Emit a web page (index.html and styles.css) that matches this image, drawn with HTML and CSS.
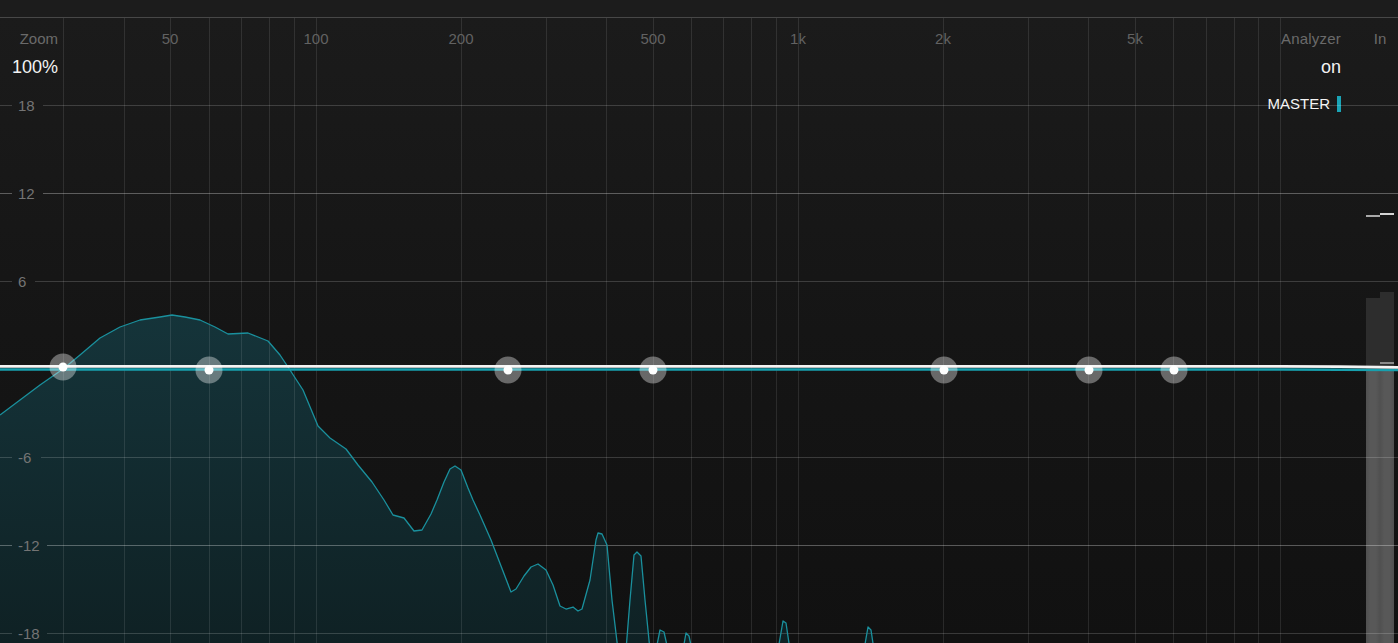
FILE: index.html
```html
<!DOCTYPE html>
<html lang="en">
<head>
<meta charset="utf-8">
<title>EQ</title>
<link rel="stylesheet" href="styles.css">
</head>
<body>
<div class="topbar"></div>
<main class="graph">
  <div class="overlay">
    <div class="zoom-ctl">
      <div class="ctl-label">Zoom</div>
      <div class="ctl-value">100%</div>
    </div>
    <div class="right-ctls">
      <div class="analyzer-ctl">
        <div class="ctl-label">Analyzer</div>
        <div class="ctl-value">on</div>
        <div class="source">MASTER<span class="source-bar"></span></div>
      </div>
      <div class="meter-col">
        <div class="ctl-label">In</div>
        <div class="meter">
          <div class="channel">
            <div class="peak peak-left"></div>
            <div class="spacer"></div>
            <div class="level-dark" style="height:72px"></div>
            <div class="level-light" style="height:273px"></div>
          </div>
          <div class="channel">
            <div class="peak peak-right"></div>
            <div class="spacer"></div>
            <div class="level-dark" style="height:78px"><div class="hold-mark"></div></div>
            <div class="level-light" style="height:273px"></div>
          </div>
        </div>
      </div>
    </div>
  </div>

  <svg class="plot" viewBox="0 18 1398 625" width="1398" height="625" xmlns="http://www.w3.org/2000/svg">
    <defs>
      <linearGradient id="specFill" gradientUnits="userSpaceOnUse" x1="0" y1="315" x2="0" y2="643">
        <stop offset="0" stop-color="#15343a"/>
        <stop offset="1" stop-color="#0f2124"/>
      </linearGradient>
    </defs>

    <path class="spec-fill" d="M0,415 L20,400 L40,385 L63,369 L80,355 L100,338 L120,327 L140,320 L160,317 L172,315 L185,317 L200,320 L215,327 L228,334 L248,333 L268,341 L280,355 L290,370 L303,390 L318,426 L330,438 L346,449 L358,465 L372,482 L384,500 L393,515 L404,518 L414,531 L422,530 L431,514 L437,500 L444,482 L450,469 L455,466 L461,470 L468,488 L473,500 L480,515 L491,540 L501,566 L511,592 L516,589 L524,576 L531,567 L538,564 L546,570 L553,585 L560,606 L566,609 L573,607 L578,611 L582,609 L590,580 L596,540 L598,533 L602,534 L607,545 L612,600 L618,650 L626,650 L630,600 L634,555 L637,552 L641,556 L645,600 L650,650 L656,650 L660,630 L664,632 L668,650 L683,650 L686,633 L689,636 L692,650 L778,650 L783,621 L786,623 L790,650 L864,650 L868,627 L871,630 L874,650 L0,650 Z"/>

    <g class="vgrid">
      <line x1="63.5" y1="18" x2="63.5" y2="643"/>
      <line x1="124.5" y1="18" x2="124.5" y2="643"/>
      <line x1="170.5" y1="18" x2="170.5" y2="643"/>
      <line x1="209.5" y1="18" x2="209.5" y2="643"/>
      <line x1="241.5" y1="18" x2="241.5" y2="643"/>
      <line x1="269.5" y1="18" x2="269.5" y2="643"/>
      <line x1="294.5" y1="18" x2="294.5" y2="643"/>
      <line x1="316.5" y1="18" x2="316.5" y2="643"/>
      <line x1="461.5" y1="18" x2="461.5" y2="643"/>
      <line x1="546.5" y1="18" x2="546.5" y2="643"/>
      <line x1="606.5" y1="18" x2="606.5" y2="643"/>
      <line x1="653.5" y1="18" x2="653.5" y2="643"/>
      <line x1="691.5" y1="18" x2="691.5" y2="643"/>
      <line x1="723.5" y1="18" x2="723.5" y2="643"/>
      <line x1="751.5" y1="18" x2="751.5" y2="643"/>
      <line x1="776.5" y1="18" x2="776.5" y2="643"/>
      <line x1="798.5" y1="18" x2="798.5" y2="643"/>
      <line x1="943.5" y1="18" x2="943.5" y2="643"/>
      <line x1="1028.5" y1="18" x2="1028.5" y2="643"/>
      <line x1="1088.5" y1="18" x2="1088.5" y2="643"/>
      <line x1="1135.5" y1="18" x2="1135.5" y2="643"/>
      <line x1="1173.5" y1="18" x2="1173.5" y2="643"/>
      <line x1="1206.5" y1="18" x2="1206.5" y2="643"/>
      <line x1="1234.5" y1="18" x2="1234.5" y2="643"/>
      <line x1="1258.5" y1="18" x2="1258.5" y2="643"/>
      <line x1="1280.5" y1="18" x2="1280.5" y2="643"/>
    </g>

    <g class="hgrid">
      <line x1="0" y1="105.5" x2="12" y2="105.5"/><line x1="43" y1="105.5" x2="1398" y2="105.5"/>
      <line class="major" x1="0" y1="193.5" x2="12" y2="193.5"/><line class="major" x1="43" y1="193.5" x2="1398" y2="193.5"/>
      <line x1="0" y1="281.5" x2="12" y2="281.5"/><line x1="35" y1="281.5" x2="1398" y2="281.5"/>
      <line x1="0" y1="457.5" x2="12" y2="457.5"/><line x1="41" y1="457.5" x2="1398" y2="457.5"/>
      <line class="major" x1="0" y1="545.5" x2="12" y2="545.5"/><line class="major" x1="47" y1="545.5" x2="1398" y2="545.5"/>
      <line x1="0" y1="633.5" x2="12" y2="633.5"/><line x1="47" y1="633.5" x2="1398" y2="633.5"/>
    </g>

    <path class="spec-line" d="M0,415 L20,400 L40,385 L63,369 L80,355 L100,338 L120,327 L140,320 L160,317 L172,315 L185,317 L200,320 L215,327 L228,334 L248,333 L268,341 L280,355 L290,370 L303,390 L318,426 L330,438 L346,449 L358,465 L372,482 L384,500 L393,515 L404,518 L414,531 L422,530 L431,514 L437,500 L444,482 L450,469 L455,466 L461,470 L468,488 L473,500 L480,515 L491,540 L501,566 L511,592 L516,589 L524,576 L531,567 L538,564 L546,570 L553,585 L560,606 L566,609 L573,607 L578,611 L582,609 L590,580 L596,540 L598,533 L602,534 L607,545 L612,600 L618,650 M626,650 L630,600 L634,555 L637,552 L641,556 L645,600 L650,650 M656,650 L660,630 L664,632 L668,650 M683,650 L686,633 L689,636 L692,650 M778,650 L783,621 L786,623 L790,650 M864,650 L868,627 L871,630 L874,650"/>

    <path class="eq-cyan" d="M0,369.5 L1280,369.5 Q1340,369.5 1398,370"/>
    <path class="eq-white" d="M0,366.3 L1280,366.3 Q1340,366.3 1398,367.3"/>

    <g class="nodes">
      <circle class="halo" cx="63" cy="367" r="13.5"/><circle class="dot" cx="63" cy="367" r="4.5"/>
      <circle class="halo" cx="209" cy="370" r="13.5"/><circle class="dot" cx="209" cy="370" r="4.5"/>
      <circle class="halo" cx="508" cy="370" r="13.5"/><circle class="dot" cx="508" cy="370" r="4.5"/>
      <circle class="halo" cx="653" cy="370" r="13.5"/><circle class="dot" cx="653" cy="370" r="4.5"/>
      <circle class="halo" cx="944" cy="370" r="13.5"/><circle class="dot" cx="944" cy="370" r="4.5"/>
      <circle class="halo" cx="1089" cy="370" r="13.5"/><circle class="dot" cx="1089" cy="370" r="4.5"/>
      <circle class="halo" cx="1174" cy="370" r="13.5"/><circle class="dot" cx="1174" cy="370" r="4.5"/>
    </g>

    <g class="freq-labels">
      <text x="170" y="44">50</text>
      <text x="316" y="44">100</text>
      <text x="461" y="44">200</text>
      <text x="653" y="44">500</text>
      <text x="798" y="44">1k</text>
      <text x="943" y="44">2k</text>
      <text x="1135" y="44">5k</text>
    </g>

    <g class="db-labels">
      <text x="18" y="110.5">18</text>
      <text x="18" y="198.5">12</text>
      <text x="18" y="286.5">6</text>
      <text x="18" y="462.5">-6</text>
      <text x="18" y="550.5">-12</text>
      <text x="18" y="638.5">-18</text>
    </g>
  </svg>
</main>
</body>
</html>
```

FILE: styles.css
```css
html, body {
  margin: 0;
  padding: 0;
}

body {
  width: 1398px;
  height: 643px;
  overflow: hidden;
  background: #1c1c1c;
  font-family: "Liberation Sans", Arial, sans-serif;
  color: #f0f0f0;
}

.topbar {
  height: 17px;
  background: #1c1c1c;
  border-bottom: 1px solid #474747;
}

.graph {
  position: relative;
  height: 625px;
  background: linear-gradient(180deg, #1b1b1b 0%, #151515 50%, #111111 100%);
}

.overlay {
  height: 625px;
  display: flex;
  justify-content: space-between;
}

.zoom-ctl {
  width: 58px;
  padding-top: 11px;
  text-align: right;
}

.ctl-label {
  font-size: 15px;
  line-height: 20px;
  color: #6a6a6a;
}

.ctl-value {
  margin-top: 7px;
  font-size: 18px;
  line-height: 22px;
  color: #f2f2f2;
}

.right-ctls {
  display: flex;
  gap: 25px;
  padding-right: 4px;
}

.analyzer-ctl {
  padding-top: 11px;
  display: flex;
  flex-direction: column;
  align-items: flex-end;
}

.analyzer-ctl .ctl-label {
  letter-spacing: 0.2px;
}

.source {
  margin-top: 16px;
  display: flex;
  align-items: center;
  gap: 7px;
  font-size: 15px;
  line-height: 20px;
  color: #f4f4f4;
}

.source-bar {
  width: 4px;
  height: 16px;
  background: #1aa4b6;
}

.meter-col {
  width: 28px;
  padding-top: 11px;
  display: flex;
  flex-direction: column;
  align-items: stretch;
  text-align: center;
}

.meter {
  margin-top: 164px;
  flex: 1;
  display: flex;
}

.channel {
  flex: 1;
  display: flex;
  flex-direction: column;
}

.peak {
  height: 2px;
  flex: none;
}

.peak-left {
  margin-top: 2px;
  background: #a9a9a9;
}

.peak-right {
  margin-top: 0;
  background: #d4d4d4;
}

.spacer {
  flex: 1;
}

.level-dark {
  flex: none;
  background: #2d2d2d;
  display: flex;
  flex-direction: column;
  justify-content: flex-end;
}

.hold-mark {
  height: 2px;
  margin-bottom: 6px;
  background: #8a8a8a;
}

.level-light {
  flex: none;
  background: linear-gradient(90deg, #505050, #585858 30%, #585858 70%, #505050);
}

.plot {
  position: absolute;
  left: 0;
  top: 0;
  display: block;
  pointer-events: none;
}

.spec-fill {
  fill: url(#specFill);
}

.vgrid line {
  stroke: rgba(255, 255, 255, 0.1);
  stroke-width: 1;
}

.hgrid line {
  stroke: rgba(255, 255, 255, 0.17);
  stroke-width: 1;
}

.hgrid line.major {
  stroke: rgba(255, 255, 255, 0.3);
}

.spec-line {
  fill: none;
  stroke: #1a909d;
  stroke-width: 1.3;
  stroke-linejoin: round;
}

.eq-cyan {
  fill: none;
  stroke: #17a0ae;
  stroke-width: 2.4;
}

.eq-white {
  fill: none;
  stroke: #f4f4f4;
  stroke-width: 2.8;
}

.halo {
  fill: rgba(255, 255, 255, 0.36);
}

.dot {
  fill: #ffffff;
}

.freq-labels text {
  font-family: "Liberation Sans", Arial, sans-serif;
  font-size: 15px;
  fill: #626262;
  text-anchor: middle;
}

.db-labels text {
  font-family: "Liberation Sans", Arial, sans-serif;
  font-size: 15px;
  fill: #747474;
}
```
